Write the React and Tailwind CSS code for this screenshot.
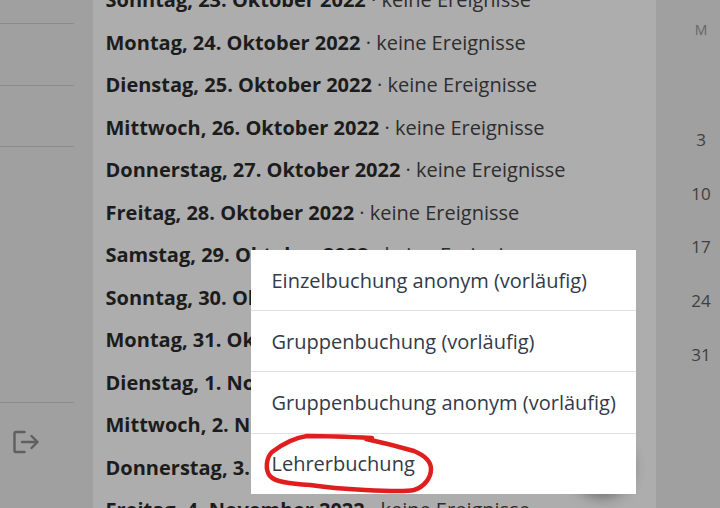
import React from "react";

const days = [
  "Sonntag, 23. Oktober 2022",
  "Montag, 24. Oktober 2022",
  "Dienstag, 25. Oktober 2022",
  "Mittwoch, 26. Oktober 2022",
  "Donnerstag, 27. Oktober 2022",
  "Freitag, 28. Oktober 2022",
  "Samstag, 29. Oktober 2022",
  "Sonntag, 30. Oktober 2022",
  "Montag, 31. Oktober 2022",
  "Dienstag, 1. November 2022",
  "Mittwoch, 2. November 2022",
  "Donnerstag, 3. November 2022",
  "Freitag, 4. November 2022",
];

const menuItems = [
  { label: "Einzelbuchung anonym (vorläufig)", row: "h-[61px] border-b leading-[61px]" },
  { label: "Gruppenbuchung (vorläufig)", row: "h-[61px] border-b leading-[61px]" },
  { label: "Gruppenbuchung anonym (vorläufig)", row: "h-[62px] border-b leading-[62px]" },
  { label: "Lehrerbuchung", row: "h-[60px] leading-[60px]" },
];

const calendarDays = ["3", "10", "17", "24", "31"];

export default function App() {
  return (
    <div className="relative flex h-[508px] w-[720px] overflow-hidden bg-[#a0a0a0] font-['Open_Sans',sans-serif]">
      {/* Sidebar */}
      <div className="flex w-[93px] shrink-0 flex-col">
        <div className="mt-[23px] h-[62px] w-[74px] border-t border-[#8c8c8c]" />
        <div className="h-[61px] w-[74px] border-t border-[#8c8c8c]" />
        <div className="h-[256px] w-[74px] border-t border-[#8c8c8c]" />
        <div className="w-[74px] border-t border-[#8c8c8c] pl-[13px] pt-[27px]">
          <svg width="26" height="24" viewBox="0 0 26 24" fill="none" stroke="#5f5f5f" strokeWidth="2.4" strokeLinecap="round" strokeLinejoin="round">
            <path d="M11.5 2H2.5a1 1 0 0 0-1 1v18a1 1 0 0 0 1 1h9" />
            <path d="M9 12h15.5M18.5 6l6 6-6 6" />
          </svg>
        </div>
      </div>

      {/* Event list */}
      <div className="w-[563px] shrink-0 bg-[#adadad] pl-[12.5px]">
        <div className="-mt-[21px] flex flex-col">
          {days.map((day) => (
            <div key={day} className="h-[42.5px] whitespace-nowrap text-[20px] leading-[42.5px] text-[#1c1c1c]">
              <span className="font-bold">{day}</span>
              <span className="text-[#2e2e2e]"> · keine Ereignisse</span>
            </div>
          ))}
        </div>
      </div>

      {/* Calendar column */}
      <div className="flex flex-1 flex-col items-end pr-[9px] text-[#3f3f3f]">
        <div className="mt-[22px] w-[20px] text-center text-[14px] leading-[16px] text-[#666666]">M</div>
        <div className="mt-[92px] flex flex-col text-[17px]">
          {calendarDays.map((d) => (
            <div key={d} className="h-[53.7px] w-[20px] text-center leading-[20px]">{d}</div>
          ))}
        </div>
      </div>

      {/* Floating button behind the menu */}
      <div className="absolute left-[572px] top-[434px] h-[60px] w-[60px] rounded-full bg-[#a0a0a0] shadow-[0_4px_14px_rgba(0,0,0,0.35)]" />

      {/* Popup menu */}
      <div className="absolute left-[251px] top-[250px] w-[385px] bg-white text-[20px] text-[#333a4a]">
        {menuItems.map((item) => (
          <div key={item.label} className={`border-[#e0e0e0] pl-[20.5px] ${item.row}`}>
            {item.label}
          </div>
        ))}
      </div>

      {/* Hand-drawn red marker */}
      <svg className="absolute left-0 top-0" width="720" height="508" fill="none">
        <path
          d="M372 438C352 437 325 436 307 436C292 438 280 446 272 452C266 458 265 470 270 476C275 482 290 484 310 485C330 488 345 489 365 490C385 491 405 492 414 490C424 487 431 478 431 469C431 462 426 456 414 451C400 447 385 443 366 439"
          stroke="#e01e1e"
          strokeWidth="4.5"
          strokeLinecap="round"
        />
      </svg>
    </div>
  );
}
